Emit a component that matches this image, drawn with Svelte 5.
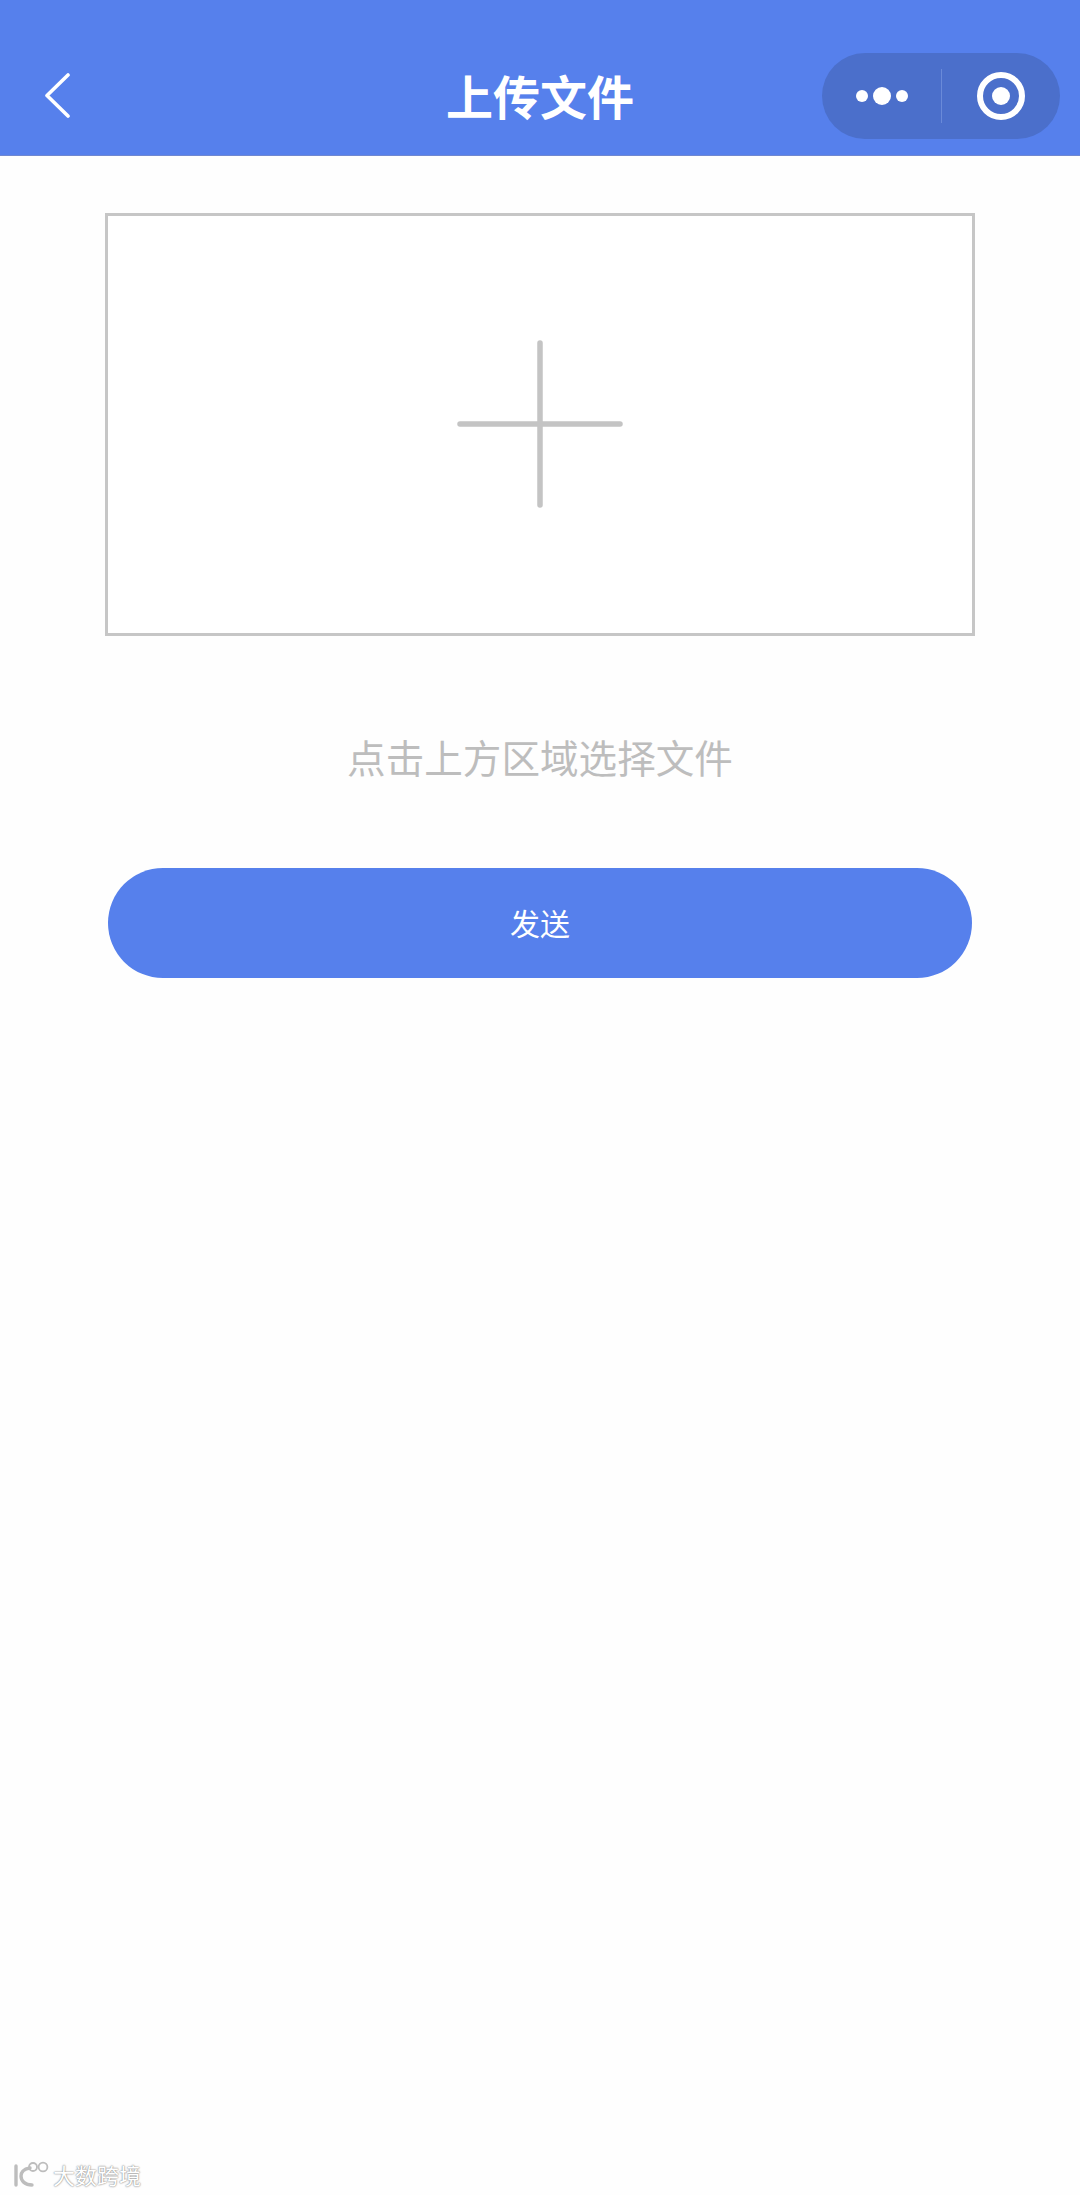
<script>
  const view = 'upload';
</script>

<div class="page" data-view={view}>
  <header class="nav">
    <button class="back" type="button" aria-label="返回">
      <svg width="26" height="45" viewBox="0 0 26 45">
        <path d="M24 2 L3 22.5 L24 43" fill="none" stroke="#fff" stroke-width="3.6" stroke-linecap="round" stroke-linejoin="round" />
      </svg>
    </button>
    <h1>上传文件</h1>
    <div class="capsule">
      <div class="dots">
        <span class="dot"></span>
        <span class="dot big"></span>
        <span class="dot"></span>
      </div>
      <div class="divider"></div>
      <div class="target"><span></span></div>
    </div>
  </header>

  <main>
    <button class="picker" type="button" aria-label="选择文件">
      <svg width="168" height="168" viewBox="0 0 168 168">
        <path d="M4 84 H164 M84 3 V165" stroke="#c4c4c4" stroke-width="5.5" stroke-linecap="round" />
      </svg>
    </button>
    <p class="hint">点击上方区域选择文件</p>
    <button class="send" type="button">发送</button>
  </main>

  <div class="watermark">
    <svg width="38" height="28" viewBox="0 0 38 28">
      <g fill="none" stroke="#bdbdbd" stroke-linecap="round">
        <path d="M3 6 V25" stroke-width="3.4" />
        <path d="M17 8 C10 9 8 13 8 16 C8 21 12 25 19 25" stroke-width="3.4" />
        <circle cx="20" cy="7" r="4" stroke-width="1.8" />
        <circle cx="30" cy="7" r="4.4" stroke-width="1.8" />
      </g>
    </svg>
    <span>大数跨境</span>
  </div>
</div>

<style>
  :global(body) {
    margin: 0;
    background: #fefefe;
  }

  .page {
    position: relative;
    height: 2195px;
    overflow: hidden;
    font-family: "Noto Sans CJK SC", "Liberation Sans", sans-serif;
  }

  .nav {
    display: grid;
    grid-template-columns: 1fr auto 1fr;
    align-items: center;
    box-sizing: border-box;
    height: 156px;
    padding: 50px 20px 16px;
    background: #5680ec;
    border-bottom: 1px solid #7088d0;
  }

  .back {
    display: flex;
    margin: 2px 0 0 24px;
    padding: 0;
    background: none;
    border: 0;
  }

  h1 {
    margin: 0;
    color: #fff;
    font-size: 47px;
    font-weight: 700;
    line-height: 1;
  }

  .capsule {
    display: flex;
    align-items: center;
    justify-self: end;
    width: 238px;
    height: 86px;
    margin-top: 3px;
    background: #4b6fcb;
    border-radius: 43px;
  }

  .dots {
    display: flex;
    flex: 1;
    align-items: center;
    justify-content: center;
    gap: 5px;
  }

  .dot {
    width: 12px;
    height: 12px;
    background: #fff;
    border-radius: 50%;
  }

  .dot.big {
    width: 18px;
    height: 18px;
  }

  .divider {
    width: 1px;
    height: 54px;
    background: #6a8ad9;
  }

  .target {
    display: flex;
    align-items: center;
    justify-content: center;
    width: 118px;
  }

  .target span {
    box-sizing: border-box;
    width: 48px;
    height: 48px;
    border: 6px solid #fff;
    border-radius: 50%;
    display: flex;
    align-items: center;
    justify-content: center;
  }

  .target span::after {
    content: '';
    width: 18px;
    height: 18px;
    background: #fff;
    border-radius: 50%;
  }

  main {
    display: flex;
    flex-direction: column;
    align-items: center;
    padding-top: 57px;
  }

  .picker {
    display: flex;
    align-items: center;
    justify-content: center;
    box-sizing: border-box;
    width: 870px;
    height: 423px;
    padding: 0 0 2px;
    background: #fff;
    border: 3px solid #c6c6c6;
  }

  .hint {
    margin: 97px 0 0;
    color: #bdbdbd;
    font-size: 38.6px;
    line-height: 46px;
  }

  .send {
    width: 864px;
    height: 110px;
    margin-top: 89px;
    padding: 0 0 3px;
    color: #fff;
    font: inherit;
    font-size: 30px;
    background: #5680ec;
    border: 0;
    border-radius: 55px;
  }

  .watermark {
    position: absolute;
    left: 13px;
    bottom: 7px;
    display: flex;
    align-items: center;
    gap: 2px;
    color: #fff;
    font-size: 22px;
    line-height: 28px;
    text-shadow: 0 0 2px #8a8a8a, 0 0 1px #8a8a8a;
  }
</style>
